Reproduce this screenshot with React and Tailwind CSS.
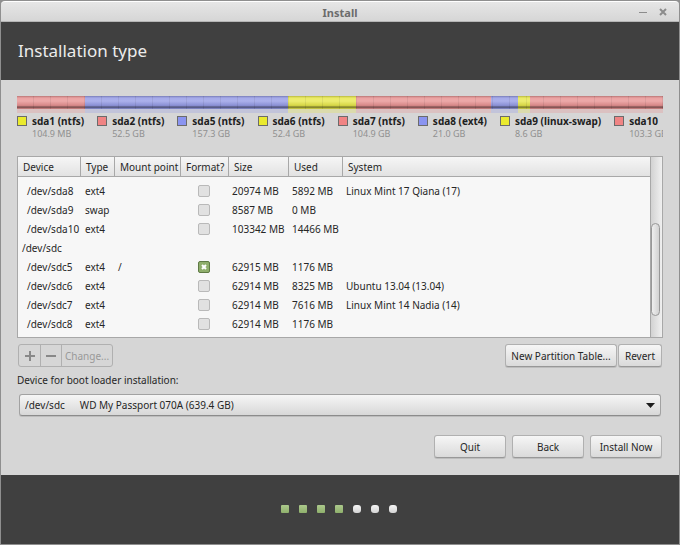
const partitions = [
  { name: "sda1 (ntfs)", label: "104.9 MB", size: 0.1, color: "bg-[#eaea2e]", bar: "bg-[#e8e84e]" },
  { name: "sda2 (ntfs)", label: "52.5 GB", size: 52.5, color: "bg-[#f08484]", bar: "bg-[#e89494]" },
  { name: "sda5 (ntfs)", label: "157.3 GB", size: 157.3, color: "bg-[#8a94f0]", bar: "bg-[#979de6]" },
  { name: "sda6 (ntfs)", label: "52.4 GB", size: 52.4, color: "bg-[#eaea2e]", bar: "bg-[#e8e84e]" },
  { name: "sda7 (ntfs)", label: "104.9 GB", size: 104.9, color: "bg-[#f08484]", bar: "bg-[#e89494]" },
  { name: "sda8 (ext4)", label: "21.0 GB", size: 21, color: "bg-[#8a94f0]", bar: "bg-[#979de6]" },
  { name: "sda9 (linux-swap)", label: "8.6 GB", size: 8.6, color: "bg-[#eaea2e]", bar: "bg-[#e8e84e]" },
  { name: "sda10", label: "103.3 GB", size: 103.3, color: "bg-[#f08484]", bar: "bg-[#e89494]" },
];

const columns = [
  { title: "Device", width: "w-[63px]" },
  { title: "Type", width: "w-[34px]" },
  { title: "Mount point", width: "w-[66px]" },
  { title: "Format?", width: "w-12" },
  { title: "Size", width: "w-[60px]" },
  { title: "Used", width: "w-[54px]" },
  { title: "System", width: "w-auto" },
];

const rows = [
  { device: "/dev/sda8", type: "ext4", size: "20974 MB", used: "5892 MB", system: "Linux Mint 17 Qiana (17)" },
  { device: "/dev/sda9", type: "swap", size: "8587 MB", used: "0 MB" },
  { device: "/dev/sda10", type: "ext4", size: "103342 MB", used: "14466 MB" },
  { device: "/dev/sdc", disk: true },
  { device: "/dev/sdc5", type: "ext4", mount: "/", format: true, size: "62915 MB", used: "1176 MB" },
  { device: "/dev/sdc6", type: "ext4", size: "62914 MB", used: "8325 MB", system: "Ubuntu 13.04 (13.04)" },
  { device: "/dev/sdc7", type: "ext4", size: "62914 MB", used: "7616 MB", system: "Linux Mint 14 Nadia (14)" },
  { device: "/dev/sdc8", type: "ext4", size: "62914 MB", used: "1176 MB" },
];

const steps = [true, true, true, true, false, false, false];

function Button({ className, children }) {
  return (
    <button
      type="button"
      className={`h-[23px] rounded-[3px] border border-[#b0b0b0] border-b-[#989898] bg-linear-to-b from-[#f6f6f6] to-[#dadada] text-center whitespace-nowrap shadow-[0_1px_0_#bdbdbd] ${className}`}
    >
      {children}
    </button>
  );
}

function TitleBar() {
  return (
    <div className="relative flex h-[21px] items-center justify-center rounded-t-[4px] border-t border-b border-t-white border-b-[#b5b5b5] bg-linear-to-b from-[#e6e6e6] to-[#d6d6d6]">
      <h1 className="pt-0.5 text-[11px] leading-4 font-bold text-[#6c6c6c]">Install</h1>
      <div className="absolute top-0 right-3 flex h-full items-center gap-3">
        <button type="button" aria-label="Minimize" className="text-[#8c8c8c]">
          <svg width="8" height="8" viewBox="0 0 8 8" stroke="currentColor">
            <path d="M0 4.500h8" />
          </svg>
        </button>
        <button type="button" aria-label="Close" className="text-[#8c8c8c]">
          <svg width="8" height="8" viewBox="0 0 8 8" stroke="currentColor" strokeWidth="2">
            <path d="M1 1l6 6M7 1l-6 6" />
          </svg>
        </button>
      </div>
    </div>
  );
}

function PartitionBar() {
  return (
    <div>
      <div className="relative">
        <div className="flex h-[13px]">
          {partitions.map((p) => (
            <div key={p.name} className={p.bar} style={{ flexGrow: p.size }} />
          ))}
        </div>
        <div className="flex h-1 opacity-30">
          {partitions.map((p) => (
            <div key={p.name} className={p.bar} style={{ flexGrow: p.size }} />
          ))}
        </div>
        <div className="absolute inset-x-0 top-0 h-[13px] bg-[linear-gradient(to_bottom,#0003_0,#fff2_2px,#fff3_5px,#0001_9px,#0002_10px,#0008_11px,#0001_13px),repeating-linear-gradient(to_right,transparent_0,transparent_16px,#00000015_16px,#00000015_17px)]" />
      </div>
      <ul className="flex gap-[13px] overflow-hidden whitespace-nowrap">
        {partitions.map((p) => (
          <li key={p.name} className="flex shrink-0 gap-[5px]">
            <span className={`mt-[3px] size-[10px] border border-[#6b6b6b] ${p.color}`} />
            <div>
              <div className="leading-4 font-bold text-[#202020]">{p.name}</div>
              <div className="text-[9px] leading-[10px] text-[#909090]">{p.label}</div>
            </div>
          </li>
        ))}
      </ul>
    </div>
  );
}

function FormatBox({ device, checked }) {
  return (
    <input
      type="checkbox"
      aria-label={`Format ${device}`}
      defaultChecked={checked}
      className="ml-[17px] block size-3 appearance-none rounded-[2px] border border-[#b9b9b9] bg-[#e1e1e1] checked:border-[#5f7a45] checked:bg-[#8fae6c] checked:bg-[url('data:image/svg+xml,%3Csvg%20xmlns=%22http://www.w3.org/2000/svg%22%20viewBox=%220%200%2010%2010%22%3E%3Cpath%20d=%22M3%203l4%204m0-4l-4%204%22%20stroke=%22white%22%20stroke-width=%222%22/%3E%3C/svg%3E')]"
    />
  );
}

function PartitionTable() {
  return (
    <div className="flex h-[182px] border border-[#a8a8a8] bg-[#f7f7f7]">
      <div className="min-w-0 flex-1 overflow-hidden">
        <table className="w-full table-fixed border-separate border-spacing-0 text-left whitespace-nowrap">
          <thead>
            <tr className="h-5">
              {columns.map((c) => (
                <th
                  key={c.title}
                  className={`border-r border-b border-[#a8a8a8] bg-linear-to-b from-[#f6f6f6] to-[#e2e2e2] py-0 pr-0 pl-[5px] leading-4 font-normal last:border-r-0 ${c.width}`}
                >
                  {c.title}
                </th>
              ))}
            </tr>
          </thead>
          <tbody className="before:block before:h-1">
            {rows.map((r) => (
              <tr key={r.device} className="h-[19px]">
                <td className={r.disk ? "p-0 pl-1" : "p-0 pl-[9px]"}>{r.device}</td>
                <td className="p-0 pl-1">{r.type}</td>
                <td className="p-0 pl-[3px]">{r.mount}</td>
                <td className="p-0">{!r.disk && <FormatBox device={r.device} checked={r.format} />}</td>
                <td className="p-0 pl-[3px]">{r.size}</td>
                <td className="p-0 pl-[3px]">{r.used}</td>
                <td className="p-0 pl-[3px]">{r.system}</td>
              </tr>
            ))}
          </tbody>
        </table>
      </div>
      <div className="flex w-3 flex-col border-l border-[#a8a8a8] bg-linear-to-r from-[#d2d2d2] to-[#f0f0f0] pt-[66px]">
        <div className="h-[93px] w-[9px] rounded-full border border-[#989898] bg-linear-to-r from-[#efefef] to-[#d2d2d2]" />
      </div>
    </div>
  );
}

function App() {
  return (
    <div className="min-h-screen bg-[#8f8f8f] font-['Noto_Sans',sans-serif] text-[10px] leading-4 text-[#262626]">
      <div className="flex min-h-screen flex-col p-px">
        <TitleBar />
        <header className="flex h-[58px] items-center bg-[#404040] px-[17px]">
          <h2 className="text-[17px] leading-6 text-[#ececec]">Installation type</h2>
        </header>

        <main className="flex-1 bg-[#d6d6d6] px-4 pt-4">
          <PartitionBar />
          <div className="mt-[17px]">
            <PartitionTable />
          </div>

          <div className="mt-1.5 mr-px flex justify-between">
            <div className="ml-px flex h-[23px] divide-x divide-[#b0b0b0] rounded-[3px] border border-[#b0b0b0] text-[#999]">
              <button type="button" disabled aria-label="Add" className="flex w-[22px] items-center justify-center">
                <svg width="10" height="10" viewBox="0 0 10 10" stroke="#888" strokeWidth="2">
                  <path d="M5 0v10M0 5h10" />
                </svg>
              </button>
              <button type="button" disabled aria-label="Remove" className="flex w-[21px] items-center justify-center">
                <svg width="10" height="10" viewBox="0 0 10 10" stroke="#888" strokeWidth="2">
                  <path d="M0 5h10" />
                </svg>
              </button>
              <button type="button" disabled className="w-[50px] text-center">
                Change...
              </button>
            </div>
            <div className="flex gap-px">
              <Button className="w-28">New Partition Table...</Button>
              <Button className="w-11">Revert</Button>
            </div>
          </div>

          <label htmlFor="boot-device" className="mt-[5px] block">
            Device for boot loader installation:
          </label>
          <div className="relative mx-0.5 mt-1.5">
            <select
              id="boot-device"
              className="block h-[22px] w-full appearance-none rounded-[3px] border border-[#a2a2a2] border-b-[#8c8c8c] bg-linear-to-b from-[#f6f6f6] to-[#d8d8d8] pl-[5px] shadow-[0_1px_0_#bdbdbd]"
            >
              <option>{"/dev/sdc\u2003\u2002WD My Passport 070A (639.4 GB)"}</option>
            </select>
            <svg className="pointer-events-none absolute top-[9px] right-1.5" width="9" height="5" viewBox="0 0 9 5">
              <path d="M0 0h9L4.500 5z" fill="#1c1c1c" />
            </svg>
          </div>

          <div className="mt-[19px] mr-px flex justify-end gap-1.5 pb-4">
            <Button className="w-[72px]">Quit</Button>
            <Button className="w-[72px]">Back</Button>
            <Button className="w-[72px]">Install Now</Button>
          </div>
        </main>

        <footer className="flex h-[69px] items-center justify-center gap-[10px] bg-[#404040] pr-0.5 pb-0.5">
          {steps.map((done, i) => (
            <span
              key={i}
              className={
                done
                  ? "size-2 rounded-[1px] bg-linear-to-b from-[#acc98c] to-[#8fb06c]"
                  : "size-2 rounded-[3px] bg-linear-to-b from-[#f4f4f4] to-[#d4d4d4]"
              }
            />
          ))}
        </footer>
      </div>
    </div>
  );
}

export default App;
